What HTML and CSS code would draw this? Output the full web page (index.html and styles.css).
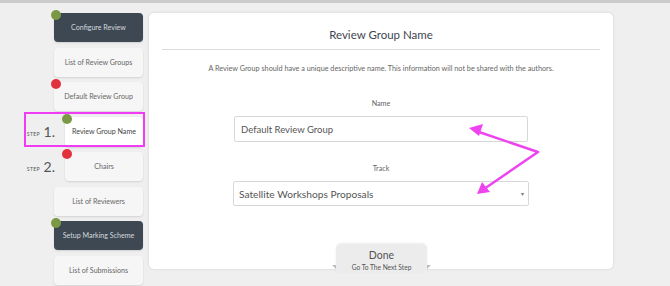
FILE: index.html
```html
<!DOCTYPE html>
<html>
<head>
    <meta charset="utf-8" />
    <link rel="stylesheet" href="styles.css">
</head>
<body>
    <div class="page">
        <div class="steps">
            <div class="item dark"><span class="dot green"></span>Configure Review</div>
            <div class="item">List of Review Groups</div>
            <div class="item"><span class="dot red"></span>Default Review Group</div>
            <div class="steprow">
                <div class="steplabel"><small>STEP</small> 1.</div>
                <div class="item sub active"><span class="dot green"></span>Review Group Name</div>
            </div>
            <div class="steprow">
                <div class="steplabel"><small>STEP</small> 2.</div>
                <div class="item sub"><span class="dot red"></span>Chairs</div>
            </div>
            <div class="item">List of Reviewers</div>
            <div class="item dark"><span class="dot green"></span>Setup Marking Scheme</div>
            <div class="item">List of Submissions</div>
            <div class="highlight"></div>
        </div>

        <div class="card">
            <h1 class="title">Review Group Name</h1>
            <p class="intro">A Review Group should have a unique descriptive name. This information will not be shared with the authors.</p>
            <div class="field first">
                <label class="label">Name</label>
                <div class="input">Default Review Group</div>
            </div>
            <div class="field">
                <label class="label">Track</label>
                <div class="input select">Satellite Workshops Proposals<span class="caret">&#9662;</span></div>
            </div>
            <div class="done">
                <div class="done_big">Done</div>
                <div class="done_small">Go To The Next Step</div>
            </div>
        </div>
    </div>

    <svg class="arrows" width="670" height="286" viewBox="0 0 670 286">
        <g stroke="#ee44f0" stroke-width="2.5" fill="none" stroke-linecap="round" stroke-linejoin="round">
            <polyline points="476,131 538,152 484,189" />
        </g>
        <g fill="#ee44f0">
            <polygon points="469,128 483,124 479,136" />
            <polygon points="477,194 482,182 490,192" />
        </g>
    </svg>
</body>
</html>
```

FILE: styles.css
```css
body {
    margin: 0;
    background: #efefef;
    font-family: Lato, "Open Sans", sans-serif;
    color: #666;
    border-top: 3px solid #cbcbcb;
    height: 283px;
    overflow: hidden;
}

.page {
    display: flex;
    align-items: flex-start;
    padding-top: 10px;
}

.steps {
    position: relative;
    width: 143px;
    display: flex;
    flex-direction: column;
    align-items: flex-end;
    gap: 5.5px;
}

.item {
    position: relative;
    width: 89px;
    height: 29px;
    box-sizing: border-box;
    display: flex;
    align-items: center;
    justify-content: center;
    background: #f6f6f6;
    border-radius: 4px;
    box-shadow: 0 1px 2px rgba(0, 0, 0, 0.12);
    font-size: 7.1px;
    color: #666;
    white-space: nowrap;
}

.item.dark {
    background: #3d4853;
    color: #d5d9dd;
}

.item.sub {
    width: 78px;
}

.item.active {
    background: #fff;
    height: 30px;
    color: #444;
}

.dot {
    position: absolute;
    left: -3px;
    top: -3px;
    width: 10px;
    height: 10px;
    border-radius: 50%;
}

.dot.green {
    background: #7b9944;
}

.dot.red {
    background: #e1313f;
}

.steprow {
    display: flex;
    align-items: center;
    justify-content: flex-end;
    gap: 10px;
}

.steplabel {
    font-size: 14px;
    color: #555;
    white-space: nowrap;
}

.steplabel small {
    font-size: 5.2px;
    letter-spacing: 0.3px;
    vertical-align: 1px;
}

.highlight {
    position: absolute;
    left: 24px;
    top: 99px;
    width: 117px;
    height: 31px;
    border: 2.5px solid #f03cf5;
}

.card {
    position: relative;
    margin-left: 6px;
    width: 464px;
    height: 256px;
    background: #fff;
    border-radius: 5px;
    box-shadow: 0 0 3px rgba(0, 0, 0, 0.12);
    display: flex;
    flex-direction: column;
    align-items: center;
}

.title {
    margin: 15px 13px 0;
    align-self: stretch;
    text-align: center;
    font-weight: normal;
    font-size: 11.5px;
    color: #3e4650;
    padding-bottom: 8px;
    border-bottom: 1px solid #dcdcdc;
}

.intro {
    margin: 14px 0 0;
    font-size: 7.25px;
    color: #666;
}

.field {
    display: flex;
    flex-direction: column;
    align-items: center;
}

.label {
    margin-top: 22px;
    margin-bottom: 8px;
    font-size: 7.2px;
    color: #666;
}

.field.first .label {
    margin-top: 26px;
}

.input {
    width: 294px;
    height: 26px;
    box-sizing: border-box;
    border: 1px solid #d8d8d8;
    border-radius: 2px;
    padding-left: 6px;
    display: flex;
    align-items: center;
    font-size: 9.5px;
    color: #555;
}

.input.select {
    width: 296px;
    height: 25px;
    padding-left: 5px;
    font-size: 10.2px;
    position: relative;
}

.caret {
    position: absolute;
    right: 4px;
    top: 8px;
    font-size: 6px;
    color: #777;
}

.done {
    position: absolute;
    bottom: -4px;
    left: 187px;
    width: 91px;
    height: 29px;
    background: #ececec;
    border-radius: 5px 5px 0 0;
    box-shadow: 0 -1px 2px rgba(0, 0, 0, 0.08);
    display: flex;
    flex-direction: column;
    align-items: center;
}

.done::before,
.done::after {
    content: "";
    position: absolute;
    bottom: 0;
    border-bottom: 4px solid transparent;
    border-top: 4px solid #bdbdbd;
}

.done::before {
    left: -4px;
    border-left: 4px solid transparent;
}

.done::after {
    right: -4px;
    border-right: 4px solid transparent;
}

.done_big {
    margin-top: 5px;
    font-size: 10.5px;
    color: #555;
}

.done_small {
    margin-top: 2px;
    font-size: 6.6px;
    color: #555;
}

.arrows {
    position: absolute;
    left: 0;
    top: 0;
    pointer-events: none;
}
```
